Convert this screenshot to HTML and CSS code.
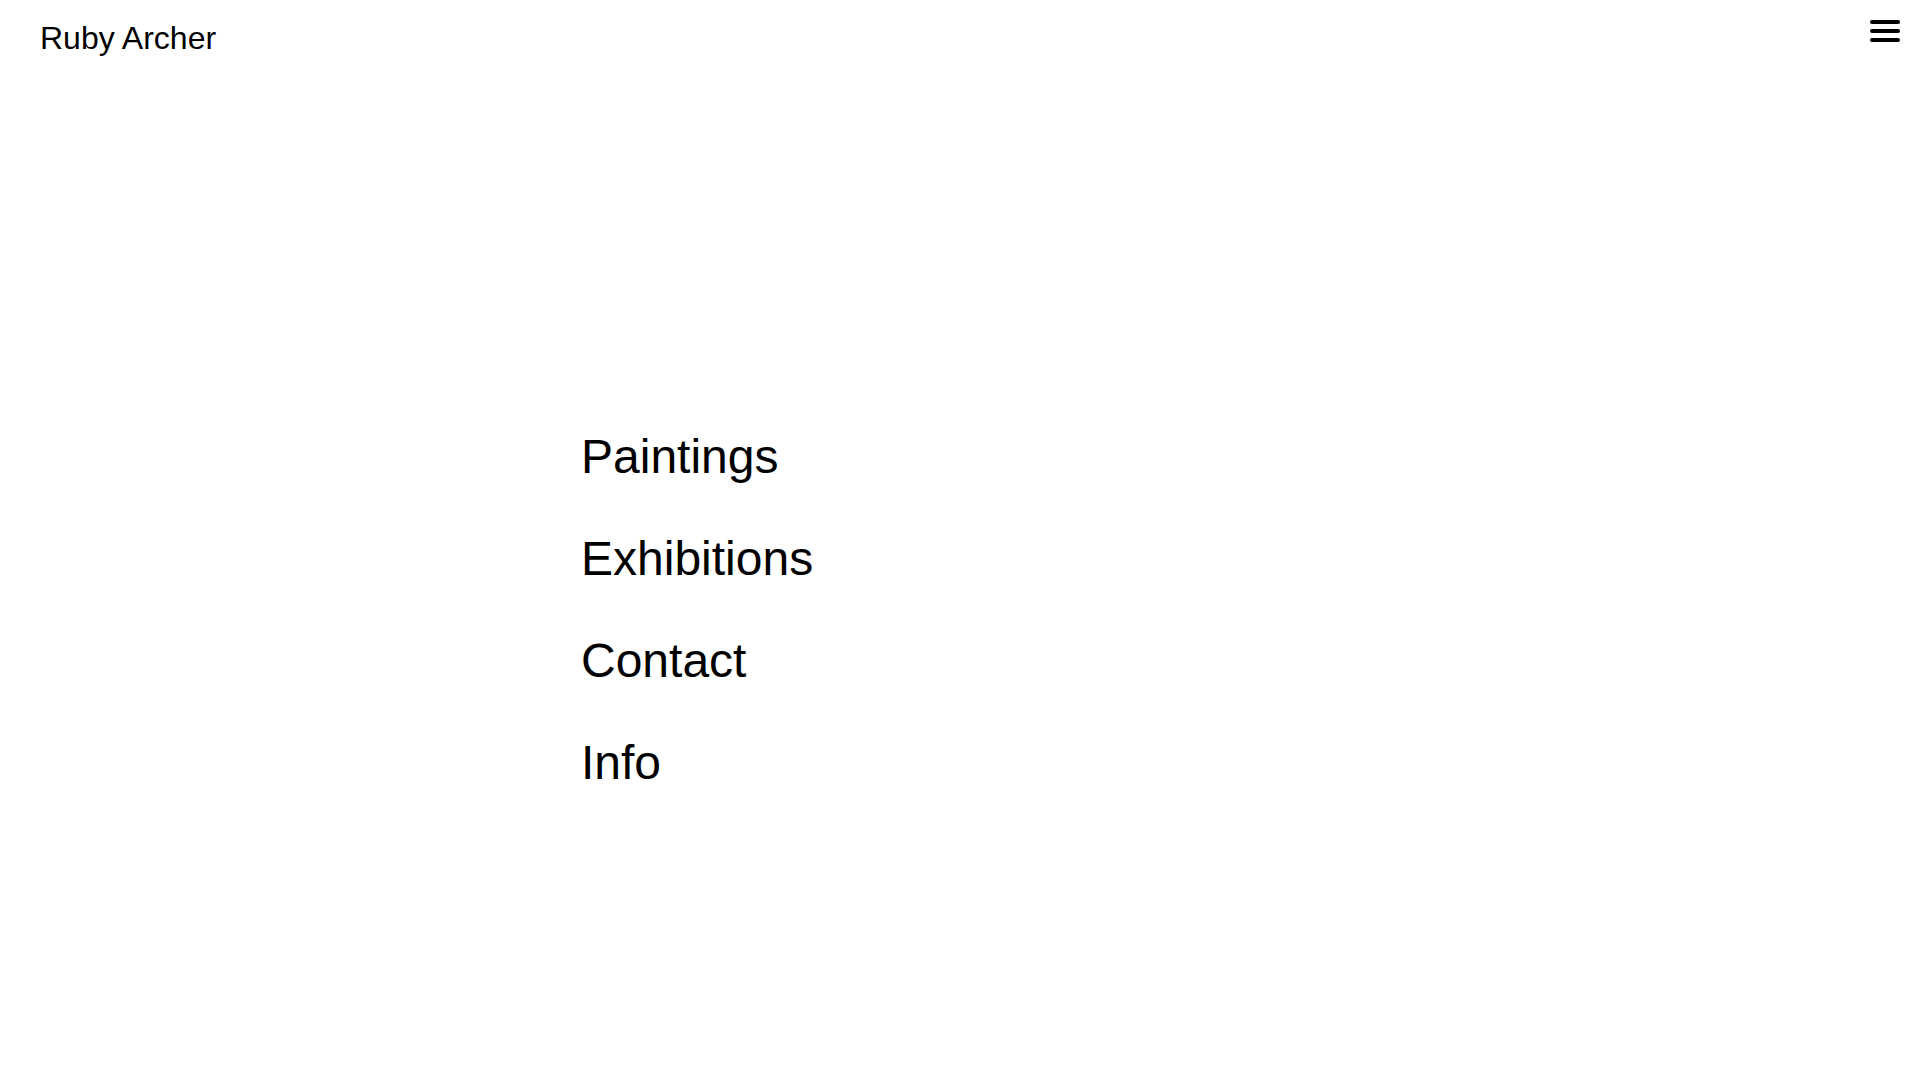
FILE: index.html
```html
<!DOCTYPE html>
<html lang="en">
<head>
    <meta charset="UTF-8">
    <meta name="viewport" content="width=device-width, initial-scale=1.0">
    <title>Ruby Archer</title>
    <link rel="stylesheet" href="styles.css">
</head>
<body>
    <!-- top bar -->
    <header class="site-header">
        <a class="site-title" href="#">Ruby Archer</a>
        <button class="menu-toggle" aria-label="Menu">
            <svg width="30" height="22" viewBox="0 0 30 22">
                <line x1="2" y1="2" x2="28" y2="2" />
                <line x1="2" y1="11" x2="28" y2="11" />
                <line x1="2" y1="20" x2="28" y2="20" />
            </svg>
        </button>
    </header>

    <!-- main menu -->
    <nav class="main-nav">
        <a href="#">Paintings</a>
        <a href="#">Exhibitions</a>
        <a href="#">Contact</a>
        <a href="#">Info</a>
    </nav>
</body>
</html>
```

FILE: styles.css
```css
body {
    font-family: "Liberation Sans", Arial, sans-serif;
    margin: 0;
    padding: 0;
    background: #fff;
    color: #000;
}

a {
    color: inherit;
    text-decoration: none;
}

/* header */
.site-header {
    display: flex;
    justify-content: space-between;
    align-items: flex-start;
    padding: 20px 20px 0 40px;
}

.site-title {
    font-size: 32px;
    line-height: 37px;
}

.menu-toggle {
    padding: 0;
    border: none;
    background: none;
    cursor: pointer;
    display: block;
}

.menu-toggle svg {
    display: block;
}

.menu-toggle line {
    stroke: #000;
    stroke-width: 4;
    stroke-linecap: round;
}

/* navigation */
.main-nav {
    display: flex;
    flex-direction: column;
    align-items: flex-start;
    gap: 47px;
    margin-top: 372px;
    padding-left: 581px;
}

.main-nav a {
    font-size: 48px;
    line-height: 55px;
}
```
